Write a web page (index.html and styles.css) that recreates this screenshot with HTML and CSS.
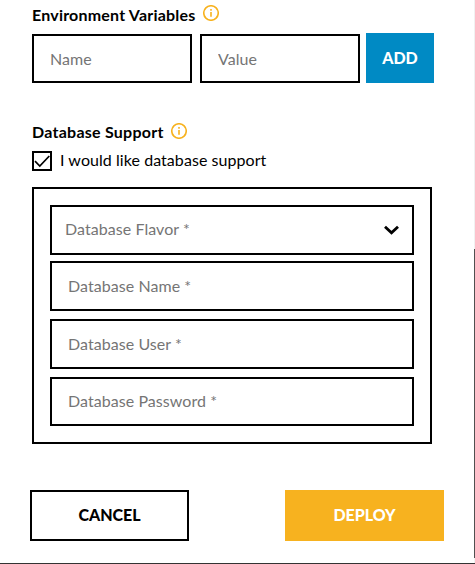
FILE: index.html
```html
<!DOCTYPE html>
<html lang="en">
<head>
<meta charset="utf-8">
<title>Deploy</title>
<link rel="stylesheet" href="styles.css">
</head>
<body>
<form class="dialog">
  <div class="heading heading-env"><span class="t-env">Environment Variables</span>
    <svg class="info" viewBox="0 0 16 16"><circle cx="8" cy="8" r="7.25"/><path d="M8 7v4.7M8 4v1.7"/></svg>
  </div>
  <div class="env-row">
    <input class="field env-field" placeholder="Name" aria-label="Name">
    <input class="field env-field value" placeholder="Value" aria-label="Value">
    <button type="button" class="add"><span>ADD</span></button>
  </div>
  <div class="heading heading-db"><span class="t-db">Database Support</span>
    <svg class="info" viewBox="0 0 16 16"><circle cx="8" cy="8" r="7.25"/><path d="M8 7v4.7M8 4v1.7"/></svg>
  </div>
  <div class="check-row">
    <svg class="checkbox" viewBox="0 0 20 20"><rect x="1" y="1" width="18" height="18"/><path class="tick" d="M3 10.2l4.8 4.8L17.3 5"/></svg>
    <span class="t-check">I would like database support</span>
  </div>
  <div class="panel">
    <div class="field select"><span class="t-flavor">Database Flavor *</span>
      <svg class="chevron" viewBox="0 0 16 10"><path d="M2 1.7L8.5 7.8l6.5-6.1"/></svg>
    </div>
    <input class="field db-field db-name" placeholder="Database Name *" aria-label="Database Name">
    <input class="field db-field db-user" placeholder="Database User *" aria-label="Database User">
    <input class="field db-field db-password" placeholder="Database Password *" aria-label="Database Password">
  </div>
  <div class="actions">
    <button type="button" class="cancel"><span>CANCEL</span></button>
    <button type="button" class="deploy"><span>DEPLOY</span></button>
  </div>
</form>
<div class="scrollbar"><div class="thumb"></div></div>
</body>
</html>
```
FILE: styles.css
```css
* { box-sizing: border-box; }
body {
  margin: 0;
  display: flex;
  width: 475px;
  height: 564px;
  overflow: hidden;
  background: #fff;
  border-bottom: 1px solid #333;
  font: 16px/20px Lato, "Liberation Sans", sans-serif;
  color: #000;
}
.dialog { width: 474px; padding: 5px 30px 0 32px; }
.heading { display: flex; height: 22px; font-weight: 700; white-space: nowrap; }
.heading-env { margin-bottom: 6px; }
.heading-env span { width: 171px; letter-spacing: 0.2px; }
.heading-db { margin-top: 40px; }
.heading-db span { width: 139px; margin-top: -1px; letter-spacing: 0.25px; }
.info { width: 16px; height: 16px; fill: none; stroke: #f7b21f; stroke-width: 1.6; }
.env-row { display: flex; align-items: flex-end; }
.field {
  display: block;
  width: 364px;
  height: 50px;
  margin: 0;
  padding: 0 16px;
  border: 2px solid #000;
  border-radius: 0;
  background: #fff;
  font: inherit;
  letter-spacing: 0.06px;
  color: #757575;
}
.field::placeholder { color: #757575; opacity: 1; }
.env-field { width: 160px; height: 49px; margin-right: 8px; padding-bottom: 1px; }
.value { margin-right: 6px; }
button { padding: 0; border: 0; border-radius: 0; font: inherit; font-weight: 900; }
.add { width: 68px; height: 50px; background: #008ac4; color: #fff; }
.check-row { display: flex; height: 20px; margin-top: 6px; white-space: nowrap; }
.t-check { margin-top: -1px; letter-spacing: 0.06px; }
.checkbox { width: 20px; height: 20px; margin-right: 8px; fill: none; stroke: #000; stroke-width: 2; }
.tick { stroke-width: 1.7; }
.panel { width: 400px; height: 257px; margin-top: 16px; padding: 16px; border: 2px solid #000; }
.select { display: flex; align-items: center; justify-content: space-between; padding: 0 13px; margin-bottom: 6px; }
.t-flavor { margin-top: -2px; }
.chevron { width: 16px; height: 10px; fill: none; stroke: #000; stroke-width: 2.8; }
.db-field { padding-bottom: 2px; }
.db-name, .db-user { margin-bottom: 8px; }
.db-password { height: 49px; }
.actions { display: flex; justify-content: space-between; margin: 46px 0 0 -2px; }
.cancel, .deploy { width: 159px; height: 51px; padding-bottom: 2px; }
.cancel { border: 2px solid #000; background: #fff; color: #000; }
.deploy { background: #f7b21f; color: #fff; }
.scrollbar { width: 1px; height: 563px; padding-top: 249px; background: #f1f1f1; }
.thumb { height: 309px; background: #505050; }
```
